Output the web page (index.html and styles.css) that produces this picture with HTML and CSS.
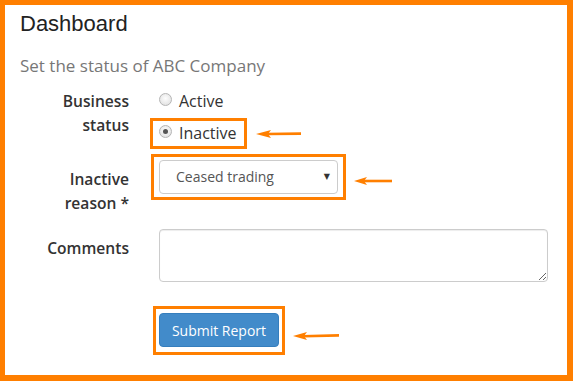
FILE: index.html
```html
<!DOCTYPE html>
<html lang="en">
<head>
  <meta charset="UTF-8">
  <meta name="viewport" content="width=device-width, initial-scale=1.0">
  <title>Dashboard</title>
  <link rel="stylesheet" href="styles.css">
</head>
<body>
  <div class="frame">
    <h1 class="title">Dashboard</h1>
    <p class="lead">Set the status of ABC Company</p>

    <form class="form">
      <div class="row row-status">
        <div class="label">Business<br>status</div>
        <div class="control">
          <div class="radio"><span class="dot"></span>Active</div>
          <div class="marked">
            <div class="callout callout-radio">
              <div class="radio"><span class="dot checked"></span>Inactive</div>
            </div>
            <svg class="arrow arrow-1" width="45" height="10" viewBox="0 0 45 10">
              <polygon points="0,5 15,1 12,5 15,9" fill="#ff7f00"/>
              <line x1="11" y1="5" x2="45" y2="4.6" stroke="#ff7f00" stroke-width="2.6"/>
            </svg>
          </div>
        </div>
      </div>

      <div class="row row-reason">
        <div class="label">Inactive<br>reason *</div>
        <div class="control">
          <div class="marked">
            <div class="callout callout-select">
              <div class="select">
                <span>Ceased trading</span>
                <span class="caret">&#9660;</span>
              </div>
            </div>
            <svg class="arrow arrow-2" width="38" height="10" viewBox="0 0 38 10">
              <polygon points="0,5 13,1 10,5 13,9" fill="#ff7f00"/>
              <line x1="9" y1="5" x2="38" y2="5" stroke="#ff7f00" stroke-width="2.6"/>
            </svg>
          </div>
        </div>
      </div>

      <div class="row row-comments">
        <div class="label">Comments</div>
        <div class="control">
          <textarea class="comments"></textarea>
        </div>
      </div>

      <div class="row row-submit">
        <div></div>
        <div class="control">
          <div class="marked">
            <div class="callout callout-btn">
              <button type="button" class="btn">Submit Report</button>
            </div>
            <svg class="arrow arrow-3" width="46" height="10" viewBox="0 0 46 10">
              <polygon points="0,5 14,1 11,5 14,9" fill="#ff7f00"/>
              <line x1="10" y1="5.2" x2="46" y2="4.4" stroke="#ff7f00" stroke-width="2.6"/>
            </svg>
          </div>
        </div>
      </div>
    </form>
  </div>
</body>
</html>
```

FILE: styles.css
```css
body {
  margin: 0;
  font-family: "Open Sans", "Liberation Sans", sans-serif;
  background: #fff;
}
.frame {
  box-sizing: border-box;
  width: 573px;
  height: 381px;
  border: solid #ff7f00;
  border-width: 5px 6px 6px 5px;
  padding: 7px 20px 0 15px;
}
.title {
  margin: 0;
  font-family: "Liberation Sans", Arial, sans-serif;
  font-weight: normal;
  font-size: 22px;
  line-height: 24px;
  color: #222;
}
.lead {
  margin: 17px 0 0;
  font-size: 17px;
  line-height: 25px;
  color: #777;
}
.form {
  margin-top: 11px;
}
.row {
  display: grid;
  grid-template-columns: 109px 1fr;
  column-gap: 30px;
}
.label {
  text-align: right;
  font-weight: 600;
  font-size: 15.6px;
  line-height: 24px;
  color: #333;
}
.row-reason {
  margin-top: 5px;
}
.row-reason .label {
  padding-top: 13px;
}
.row-comments {
  margin-top: 14px;
}
.row-comments .label {
  padding-top: 7px;
}
.row-submit {
  margin-top: 24px;
}
.marked {
  display: flex;
  align-items: center;
}
.callout {
  border: 3px solid #ff7f00;
}
.callout-radio {
  margin: 5px 0 0 -9px;
  padding: 0 7px 1px 6px;
}
.callout-select {
  margin-left: -8px;
  padding: 3px 5px;
}
.callout-btn {
  margin-left: -6px;
  padding: 4px 3px 5px;
}
.arrow-1 {
  margin: 6px 0 0 9px;
}
.arrow-2 {
  margin: 8px 0 0 8px;
}
.arrow-3 {
  margin: 10px 0 0 8px;
}
.radio {
  display: flex;
  align-items: center;
  font-size: 16px;
  line-height: 24px;
  color: #333;
}
.dot {
  box-sizing: border-box;
  width: 13px;
  height: 13px;
  margin: -3px 7px 0 0;
  border: 1px solid #b5b5b5;
  border-radius: 50%;
  background: radial-gradient(circle at 50% 40%, #fdfdfd, #dcdcdc);
  display: flex;
  align-items: center;
  justify-content: center;
}
.dot.checked::after {
  content: "";
  width: 5px;
  height: 5px;
  border-radius: 50%;
  background: #555;
}
.select {
  box-sizing: border-box;
  width: 179px;
  height: 34px;
  border: 1px solid #ccc;
  border-radius: 4px;
  padding: 0 7px 0 16px;
  display: flex;
  align-items: center;
  justify-content: space-between;
  font-size: 14px;
  line-height: 20px;
  color: #555;
}
.caret {
  font-size: 8px;
  color: #333;
  font-family: "DejaVu Sans", sans-serif;
}
.comments {
  display: block;
  box-sizing: border-box;
  width: 389px;
  height: 53px;
  margin: 0;
  border: 1px solid #ccc;
  border-radius: 4px;
  box-shadow: inset 0 1px 1px rgba(0, 0, 0, 0.075);
  resize: vertical;
}
.btn {
  display: block;
  width: 120px;
  height: 34px;
  padding: 0;
  background-color: #428bca;
  border: 1px solid #357ebd;
  border-radius: 4px;
  color: #fff;
  font-family: "Open Sans", sans-serif;
  font-size: 14px;
  cursor: pointer;
}
.btn:hover {
  background-color: #3071a9;
}
```
